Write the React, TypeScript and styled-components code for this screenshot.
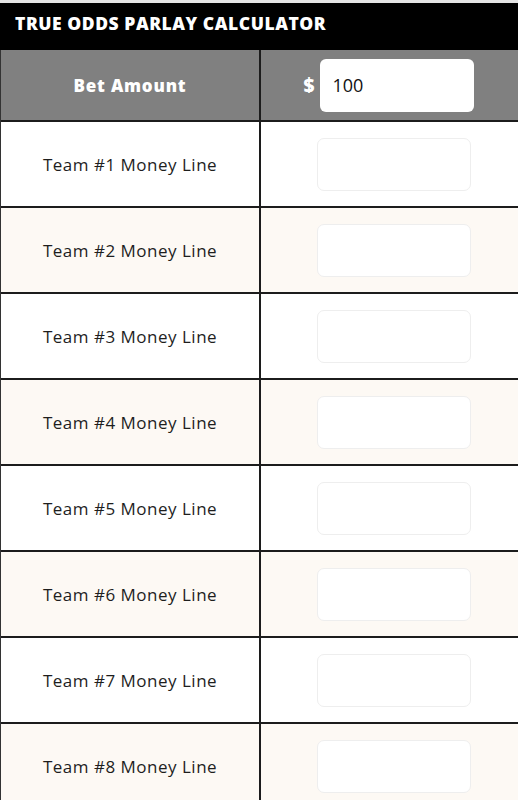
import React from 'react'
import styled, { createGlobalStyle } from 'styled-components'

const GlobalStyle = createGlobalStyle`
  html, body {
    margin: 0;
    padding: 0;
    background: #ffffff;
    overflow: hidden;
  }
  body {
    font-family: 'Open Sans', 'Liberation Sans', sans-serif;
  }
`

const SANS = `'Open Sans', 'Liberation Sans', sans-serif`

const Page = styled.div`
  padding-top: 3px;
  background: #e4e4e4;
  width: 527px;
`

const Title = styled.div`
  height: 47px;
  background: #000000;
  color: #ffffff;
  font-family: ${SANS};
  font-weight: 800;
  font-size: 17.5px;
  letter-spacing: 0.55px;
  display: flex;
  align-items: center;
  padding: 0 15px;
  padding-bottom: 8px;
  box-sizing: border-box;
`

const Table = styled.div`
  display: grid;
  grid-template-columns: 258px 1fr;
  border-left: 1px solid #333;
`

const Cell = styled.div<{ $shade: 'head' | 'even' | 'odd'; $right?: boolean }>`
  display: flex;
  align-items: center;
  justify-content: center;
  height: ${(p) => (p.$shade === 'head' ? '70px' : '84px')};
  border-bottom: 2px solid #1c1c1c;
  border-left: ${(p) => (p.$right ? '2px solid #1c1c1c' : 'none')};
  background: ${(p) =>
    p.$shade === 'head' ? '#808080' : p.$shade === 'even' ? '#fdf9f4' : '#ffffff'};
`

const HeadLabel = styled.span`
  font-family: ${SANS};
  font-weight: 800;
  font-size: 17px;
  letter-spacing: 0.8px;
  color: #ffffff;
`

const Label = styled.span`
  font-family: ${SANS};
  font-size: 17px;
  color: #1e1e1e;
  letter-spacing: 0.5px;
`

const AmountGroup = styled.div`
  display: flex;
  align-items: center;
  gap: 6px;
  margin-left: -10px;
`

const Dollar = styled.span`
  font-family: ${SANS};
  font-weight: 800;
  font-size: 19px;
  color: #ffffff;
`

const AmountInput = styled.input`
  width: 154px;
  height: 53px;
  box-sizing: border-box;
  border: none;
  border-radius: 6px;
  background: #ffffff;
  padding: 0 12px;
  font-family: ${SANS};
  font-size: 18px;
  color: #111111;
  outline: none;
`

const LineInput = styled.input`
  width: 154px;
  height: 53px;
  box-sizing: border-box;
  border: 1px solid #eeeeee;
  border-radius: 7px;
  background: #ffffff;
  outline: none;
`

const teams = [1, 2, 3, 4, 5, 6, 7, 8]

export default function App() {
  return (
    <>
      <GlobalStyle />
      <Page>
        <Title>TRUE ODDS PARLAY CALCULATOR</Title>
        <Table>
          <Cell $shade="head">
            <HeadLabel>Bet Amount</HeadLabel>
          </Cell>
          <Cell $shade="head" $right>
            <AmountGroup>
              <Dollar>$</Dollar>
              <AmountInput defaultValue="100" />
            </AmountGroup>
          </Cell>
          {teams.map((n) => {
            const shade = n % 2 === 0 ? 'even' : 'odd'
            return (
              <React.Fragment key={n}>
                <Cell $shade={shade}>
                  <Label>Team #{n} Money Line</Label>
                </Cell>
                <Cell $shade={shade} $right>
                  <LineInput />
                </Cell>
              </React.Fragment>
            )
          })}
        </Table>
      </Page>
    </>
  )
}
